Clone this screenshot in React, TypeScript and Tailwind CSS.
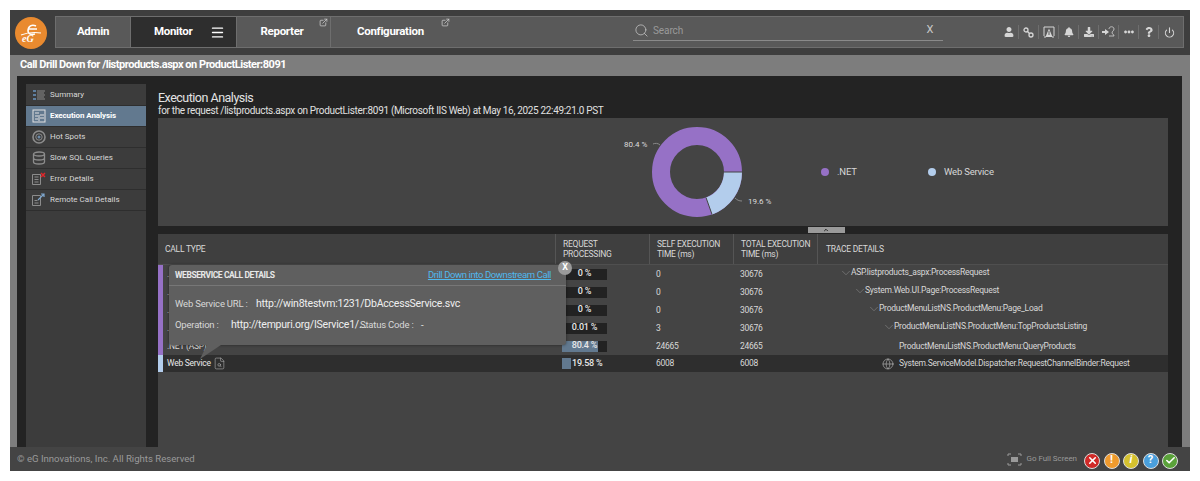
import { FaUser, FaBell, FaDownload, FaEllipsisH, FaQuestion } from 'react-icons/fa';
import { Search, ExternalLink, Menu, ChevronDown, Globe, FileSearch, X, Check, Power } from 'lucide-react';

const sideItems = ['Summary', 'Execution Analysis', 'Hot Spots', 'Slow SQL Queries', 'Error Details', 'Remote Call Details'];

const rows = [
  { pct: '0 %', bar: 0, self: '0', total: '30676', indent: 'pl-[24px]', trace: 'ASP.listproducts_aspx:ProcessRequest', arrow: true },
  { pct: '0 %', bar: 0, self: '0', total: '30676', indent: 'pl-[38px]', trace: 'System.Web.UI.Page:ProcessRequest', arrow: true },
  { pct: '0 %', bar: 0, self: '0', total: '30676', indent: 'pl-[52px]', trace: 'ProductMenuListNS.ProductMenu:Page_Load', arrow: true },
  { pct: '0.01 %', bar: 0, self: '3', total: '30676', indent: 'pl-[67px]', trace: 'ProductMenuListNS.ProductMenu:TopProductsListing', arrow: true },
  { pct: '80.4 %', bar: 80.4, self: '24665', total: '24665', indent: 'pl-[72px]', trace: 'ProductMenuListNS.ProductMenu:QueryProducts', arrow: false },
];

function NavIcon({ index }: { index: number }) {
  const cls = 'text-[#d6d6d6]';
  if (index === 0) return <FaUser size={10} className={cls} />;
  if (index === 1) {
    return (
      <svg width="11" height="11" viewBox="0 0 11 11" fill="none" stroke="#d6d6d6" strokeWidth="1.300">
        <circle cx="3" cy="3" r="2" />
        <circle cx="8" cy="8" r="2" />
        <path d="M4.500 4.500l2 2" />
      </svg>
    );
  }
  if (index === 2) {
    return (
      <svg width="12" height="12" viewBox="0 0 12 12" fill="none">
        <path d="M1 1h10M1 1v9M11 1v9M1 11h2M9 11h2" stroke="#d6d6d6" />
        <path d="M6 2.500l3.500 8.500h-7z" fill="#d6d6d6" />
        <path d="M6 5v4" stroke="#595959" />
      </svg>
    );
  }
  if (index === 3) return <FaBell size={10} className={cls} />;
  if (index === 4) return <FaDownload size={10} className={cls} />;
  if (index === 5) {
    return (
      <svg width="13" height="12" viewBox="0 0 13 12" fill="none">
        <path d="M0 5h3V3l4 3-4 3V7H0z" fill="#d6d6d6" />
        <path d="M7 3c0-3 5-3 5 0 0 2-2 2-2 4 0 1 2 1 2 3H7" stroke="#d6d6d6" strokeWidth="0.800" />
      </svg>
    );
  }
  if (index === 6) return <FaEllipsisH size={10} className={cls} />;
  if (index === 7) return <FaQuestion size={10} className={cls} />;
  return <Power size={11} strokeWidth={2.400} className={cls} />;
}

function SideIcon({ index }: { index: number }) {
  if (index === 0) {
    return (
      <svg width="14" height="12" viewBox="0 0 14 12" fill="none">
        <path d="M1 1h3v2H1zM1 5h3v2H1zM1 9h3v2H1z" fill="#5f7f9f" />
        <path d="M5 2h8M5 4h7M5 6h8M5 8h7M5 10h8" stroke="#8a8a8a" />
      </svg>
    );
  }
  if (index === 1) {
    return (
      <svg width="14" height="14" viewBox="0 0 14 14" fill="none" stroke="#e2e2e2">
        <rect x="1" y="1" width="12" height="12" />
        <path d="M3 4h4M3 7h3M3 10h3M8 6h4M8 9h4M7 6v6" />
      </svg>
    );
  }
  if (index === 2) {
    return (
      <svg width="14" height="14" viewBox="0 0 14 14" fill="none">
        <circle cx="7" cy="7" r="6" stroke="#8c8c8c" strokeWidth="1.600" />
        <circle cx="7" cy="7" r="3.200" stroke="#8c8c8c" />
        <circle cx="7" cy="7" r="1.500" fill="#6c8aa8" />
      </svg>
    );
  }
  if (index === 3) {
    return (
      <svg width="14" height="14" viewBox="0 0 14 14" fill="none" stroke="#8c8c8c" strokeWidth="1.300">
        <ellipse cx="7" cy="3" rx="5.500" ry="2" />
        <path d="M1.500 3v8c0 1.100 2.500 2 5.500 2s5.500-.9 5.500-2V3M1.500 7c0 1.100 2.500 2 5.500 2s5.500-.9 5.500-2" />
      </svg>
    );
  }
  if (index === 4) {
    return (
      <svg width="15" height="14" viewBox="0 0 15 14" fill="none">
        <path d="M1.500 2.500h8v10h-8zM3.500 5h4M3.500 7.500h4M3.500 10h4" stroke="#8c8c8c" />
        <path d="M10 1l4 4M14 1l-4 4" stroke="#e0262a" strokeWidth="1.500" />
      </svg>
    );
  }
  return (
    <svg width="15" height="14" viewBox="0 0 15 14" fill="none">
      <path d="M1.500 2.500h8v10h-8zM3.500 7.500h3M3.500 10h4" stroke="#8c8c8c" />
      <path d="M7 7l6-6M10 1h3v3" stroke="#7fa8d0" strokeWidth="1.200" />
    </svg>
  );
}

function Bar({ pct, bar }: { pct: string; bar: number }) {
  return (
    <div className="relative flex h-[11px] w-[45px] items-center justify-center bg-[#222222]">
      {bar > 0 && <div className="absolute inset-y-0 left-0 bg-[#62798f]" style={{ width: `${bar}%` }} />}
      <span className="relative text-[9px] font-medium tracking-[-0.2px] text-[#e8e8e8]">{pct}</span>
    </div>
  );
}

export default function App() {
  return (
    <div className="h-[481px] w-[1200px] overflow-hidden bg-white px-[10px] py-[10px] font-['Roboto',sans-serif]">
      <div className="flex h-[461px] w-[1180px] flex-col bg-[#444444]">
        {/* top nav */}
        <div className="flex h-[45px] shrink-0 gap-2 bg-[#3e3e3e] pl-[5px] pr-[6px] pt-[6px]">
          <div className="mt-[1px] flex h-[32px] w-[32px] shrink-0 items-center justify-center rounded-full bg-[#e98a2f]">
            <svg width="24" height="20" viewBox="0 0 24 20" fill="none">
              <path d="M9 8c0-5 4-7 8-5M9 8c0 3 3 4 7 3M9 6h9" stroke="white" strokeWidth="1.600" />
              <path d="M2 12c5-2 13-3 20-2" stroke="white" strokeWidth="1.100" />
              <text x="3" y="19" fill="white" fontSize="10" fontWeight="700" fontStyle="italic" fontFamily="Liberation Serif, serif">eG</text>
            </svg>
          </div>
          <div className="flex h-[32px] flex-1 border border-[#6e6e6e] bg-[#595959] text-[11.500px] font-bold tracking-[-0.3px] text-white">
            <div className="flex w-[75px] items-center justify-center border-r border-[#6e6e6e]">Admin</div>
            <div className="flex w-[106px] items-center gap-[18px] border-r border-[#6e6e6e] bg-[#2e2e2e] pl-[23px]">
              <span>Monitor</span>
              <Menu size={15} strokeWidth={2.200} />
            </div>
            <div className="relative flex w-[94px] items-center justify-center border-r border-[#6e6e6e] pr-[3px]">
              Reporter
              <ExternalLink size={9} className="absolute right-[2px] top-[1px] text-[#cfcfcf]" />
            </div>
            <div className="relative flex w-[130px] items-center justify-start pl-[26px]">
              Configuration
              <ExternalLink size={9} className="absolute right-[11px] top-[1px] text-[#cfcfcf]" />
            </div>
            <div className="ml-[172px] flex h-[24px] w-[310px] items-center gap-[4px] self-start border-b border-[#8a8a8a] pl-[1px] pt-[4px] font-normal">
              <Search size={15} strokeWidth={1.200} className="text-[#c8c8c8]" />
              <span className="flex-1 text-[10px] tracking-[-0.1px] text-[#9a9a9a]">Search</span>
              <span className="pr-[10px] text-[11px] text-[#c8c8c8]">X</span>
            </div>
            <div className="ml-[56px] flex items-center">
              {[0, 1, 2, 3, 4, 5, 6, 7, 8].map((i) => (
                <div key={i} className="flex h-[14px] w-[20px] items-center justify-center border-r border-[#6e6e6e] last:border-r-0">
                  <NavIcon index={i} />
                </div>
              ))}
            </div>
          </div>
        </div>

        {/* title */}
        <div className="flex h-[21px] shrink-0 items-center bg-[#7d7d7d] pl-[10px] text-[11px] font-bold tracking-[-0.47px] text-white">
          Call Drill Down for /listproducts.aspx on ProductLister:8091
        </div>

        {/* body */}
        <div className="flex min-h-0 flex-1">
          <div className="w-[7px] shrink-0 bg-[#7d7d7d]" />
          <div className="flex min-h-0 flex-1 bg-[#232323] pl-[9px]">
            {/* sidebar */}
            <div className="mt-[8px] w-[120px] shrink-0 bg-[#3c3c3c] pt-[1.500px]">
              {sideItems.map((label, i) => (
                <div
                  key={label}
                  className={
                    i === 1
                      ? 'flex h-[20.900px] items-center gap-[3px] border-b border-[#2e2e2e] bg-[#62798f] pl-[4px] text-[8px] font-bold tracking-[-0.1px] text-white'
                      : 'flex h-[20.900px] items-center gap-[3px] border-b border-[#2e2e2e] pl-[4px] text-[8px] text-[#d8d8d8]'
                  }
                >
                  <span className="flex w-[17px] shrink-0 justify-center">
                    <SideIcon index={i} />
                  </span>
                  {label}
                </div>
              ))}
            </div>

            {/* main */}
            <div className="ml-[12px] flex min-w-0 flex-1 flex-col pr-[13px]">
              <div className="h-[42px] shrink-0 pt-[14px] text-[#e4e4e4]">
                <div className="text-[12.500px] leading-[15px] tracking-[-0.5px]">Execution Analysis</div>
                <div className="text-[10px] leading-[12px] tracking-[-0.33px] text-[#e0e0e0]">
                  for the request /listproducts.aspx on ProductLister:8091 (Microsoft IIS Web) at May 16, 2025 22:49:21.0 PST
                </div>
              </div>

              {/* chart */}
              <div className="flex h-[108px] w-[1010px] shrink-0 items-center bg-[#444444]">
                <div className="ml-[465px] flex h-[108px] w-[150px] items-center">
                  <svg width="150" height="108" viewBox="0 0 150 108" fill="none">
                    <circle cx="74" cy="54" r="36" stroke="#9671c6" strokeWidth="18" />
                    <path d="M110 54A36 36 0 0 1 86 88" stroke="#b3cdec" strokeWidth="18" />
                    <path d="M119 54H101M89 96.400L83 79.500" stroke="#444444" strokeWidth="1" />
                    <path d="M30 26c2-1 5-1 7 1M112 80c2 2 4 3 7 3" stroke="#8a8a8a" />
                    <text x="1" y="29" fill="#dcdcdc" fontSize="8">80.4 %</text>
                    <text x="125" y="86" fill="#dcdcdc" fontSize="8">19.6 %</text>
                  </svg>
                </div>
                <div className="ml-[48px] flex items-center text-[9.500px] tracking-[-0.2px] text-[#d8d8d8]">
                  <span className="h-[8px] w-[8px] rounded-full bg-[#9671c6]" />
                  <span className="ml-[8px] w-[91px]">.NET</span>
                  <span className="h-[8px] w-[8px] rounded-full bg-[#b3cdec]" />
                  <span className="ml-[8px]">Web Service</span>
                </div>
              </div>

              {/* collapse handle */}
              <div className="flex h-[8px] w-[1010px] shrink-0 justify-center pl-[326px] pt-[1px]">
                <div className="flex h-[6px] w-[37px] items-center justify-center bg-[#9a9a9a]">
                  <ChevronDown size={6} strokeWidth={4} className="rotate-180 text-[#222222]" />
                </div>
              </div>

              {/* table */}
              <div className="relative min-h-0 w-[1010px] flex-1 bg-[#444444] text-[8.500px] tracking-[-0.25px] text-[#d8d8d8]">
                <div className="grid h-[31px] grid-cols-[397px_94px_84px_84px_1fr] border-b border-[#4f4f4f] bg-[#3f3f3f] leading-[10px]">
                  <div className="flex items-center pl-[7px]">CALL TYPE</div>
                  <div className="flex items-center border-l border-[#555555] pl-[7px]">REQUEST<br />PROCESSING</div>
                  <div className="flex items-center border-l border-[#555555] pl-[7px]">SELF EXECUTION<br />TIME (ms)</div>
                  <div className="flex items-center border-l border-[#555555] pl-[7px]">TOTAL EXECUTION<br />TIME (ms)</div>
                  <div className="flex items-center border-l border-[#555555] pl-[8px]">TRACE DETAILS</div>
                </div>

                {rows.map((r) => (
                  <div key={r.trace} className="grid h-[18px] grid-cols-[397px_94px_84px_84px_1fr] items-center">
                    <div className="flex h-full items-center">
                      <span className="mr-[4px] h-full w-[5px] bg-[#9671c6]" />
                      .NET (ASP)
                    </div>
                    <div className="pl-[7px]"><Bar pct={r.pct} bar={r.bar} /></div>
                    <div className="pl-[7px]">{r.self}</div>
                    <div className="pl-[7px]">{r.total}</div>
                    <div className={r.arrow ? `flex items-center pb-[3px] ${r.indent}` : `flex items-center ${r.indent}`}>
                      {r.arrow ? <ChevronDown size={14} strokeWidth={1} className="-mx-[2px] text-[#8c8c8c]" /> : <span className="w-[10px]" />}
                      <span>{r.trace}</span>
                    </div>
                  </div>
                ))}

                <div className="grid h-[17px] grid-cols-[397px_94px_84px_84px_1fr] items-center bg-[#2e2e2e]">
                  <div className="flex h-full items-center">
                    <span className="mr-[4px] h-full w-[5px] bg-[#b3cdec]" />
                    <span className="text-[#e8e8e8]">Web Service</span>
                    <FileSearch size={13} strokeWidth={1} className="ml-[2px] text-[#bdbdbd]" />
                  </div>
                  <div className="pl-[7px]">
                    <div className="flex h-[11px] items-center">
                      <span className="h-[11px] w-[9px] bg-[#62798f]" />
                      <span className="ml-[1px] text-[9px] font-medium tracking-[-0.2px] text-[#e8e8e8]">19.58 %</span>
                    </div>
                  </div>
                  <div className="pl-[7px]">6008</div>
                  <div className="pl-[7px]">6008</div>
                  <div className="flex items-center gap-[5px] pl-[65px]">
                    <Globe size={12} strokeWidth={1.200} className="text-[#bdbdbd]" />
                    <span>System.ServiceModel.Dispatcher.RequestChannelBinder:Request</span>
                  </div>
                </div>

                {/* call details popup */}
                <div className="absolute left-[11px] top-[31px] h-[80px] w-[397px] rounded-[3px] bg-[#5f5f5f] shadow-[0_0_3px_rgba(0,0,0,0.5)]">
                  <div className="flex h-[21px] items-center justify-between border-b border-[#777777] pl-[6px] pr-[15px]">
                    <span className="text-[8.500px] font-bold tracking-[-0.42px] text-[#e8e8e8]">WEBSERVICE CALL DETAILS</span>
                    <span className="text-[9.500px] tracking-[-0.4px] text-[#4fb8ee] underline">Drill Down into Downstream Call</span>
                  </div>
                  <div className="flex pl-[6px] pt-[12px] text-[9.500px] leading-[12px] tracking-[-0.2px]">
                    <span className="w-[81px] text-[#d8d8d8]">Web Service URL :</span>
                    <span className="text-[10.500px] tracking-[-0.22px] text-[#efefef]">http://win8testvm:1231/DbAccessService.svc</span>
                  </div>
                  <div className="flex pl-[6px] pt-[9px] text-[9.500px] leading-[12px] tracking-[-0.2px]">
                    <span className="w-[56px] text-[#d8d8d8]">Operation :</span>
                    <span className="w-[129px] text-[10.500px] tracking-[-0.22px] text-[#efefef]">http://tempuri.org/IService1/...</span>
                    <span className="w-[61px] text-[#d8d8d8]">Status Code :</span>
                    <span className="text-[#efefef]">-</span>
                  </div>
                  <div className="absolute -right-[6px] -top-[4px] flex h-[14px] w-[14px] items-center justify-center rounded-full bg-[#9a9a9a] text-[9px] font-bold text-white">
                    X
                  </div>
                  <svg width="28" height="15" viewBox="0 0 28 15" className="absolute left-[24px] top-[80px]">
                    <path d="M14 0H28L7 14z" fill="#5f5f5f" />
                  </svg>
                </div>
              </div>
            </div>
          </div>
          <div className="w-[8px] shrink-0 bg-[#7d7d7d]" />
        </div>

        {/* footer */}
        <div className="flex h-[24px] shrink-0 items-center justify-between bg-[#444444] pl-[7px] pr-[12px]">
          <span className="text-[9.600px] text-[#9a9a9a]">© eG Innovations, Inc. All Rights Reserved</span>
          <div className="flex items-center">
            <svg width="15" height="13" viewBox="0 0 15 13" fill="none" stroke="#9a9a9a" className="mt-[1px]">
              <path d="M1 3V1h3M11 1h3v2M1 10v2h3M11 12h3v-2" />
              <rect x="4" y="4" width="7" height="5" fill="#9a9a9a" stroke="none" />
            </svg>
            <span className="ml-[5px] mr-[7px] text-[8px] tracking-[-0.05px] text-[#9a9a9a]">Go Full Screen</span>
            <div className="mt-[3px] flex gap-[3.500px]">
              <span className="flex h-[16px] w-[16px] items-center justify-center rounded-full border border-[#ddd] bg-[#d02a28] text-white"><X size={11} strokeWidth={3.500} /></span>
              <span className="flex h-[16px] w-[16px] items-center justify-center rounded-full border border-[#ddd] bg-[#ef9a2e] text-[11px] font-bold text-white">!</span>
              <span className="flex h-[16px] w-[16px] items-center justify-center rounded-full border border-[#ddd] bg-[#d4c12f] text-[11px] font-bold italic text-white">i</span>
              <span className="flex h-[16px] w-[16px] items-center justify-center rounded-full border border-[#ddd] bg-[#4a9fdc] text-[11px] font-bold text-white">?</span>
              <span className="flex h-[16px] w-[16px] items-center justify-center rounded-full border border-[#ddd] bg-[#5aa23a] text-white"><Check size={11} strokeWidth={3.500} /></span>
            </div>
          </div>
        </div>
      </div>
    </div>
  );
}
